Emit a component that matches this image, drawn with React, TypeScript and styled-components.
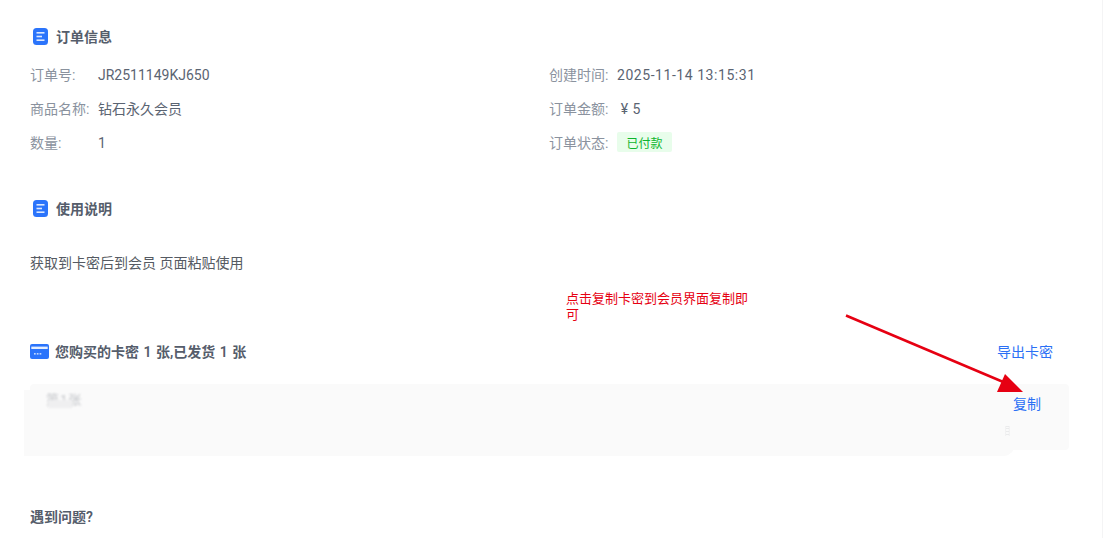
import React from "react";
import styled, { createGlobalStyle } from "styled-components";

const Global = createGlobalStyle`
  html, body { margin: 0; padding: 0; background: #fff; }
  body { font-family: Roboto, "Noto Sans CJK SC", sans-serif; font-size: 14px; overflow: hidden; }
`;

const Page = styled.div`
  position: relative;
  width: 1103px;
  height: 538px;
  box-sizing: border-box;
  padding: 25px 33px 0 30px;
  overflow: hidden;
  border-right: 1px solid #f4f4f5;
`;

const Heading = styled.div<{ $top?: number }>`
  display: flex;
  align-items: center;
  justify-content: space-between;
  height: 22px;
  margin-top: ${(p) => p.$top ?? 0}px;
`;

const HeadingLeft = styled.div<{ $card?: boolean }>`
  display: flex;
  align-items: center;
  gap: ${(p) => (p.$card ? 6 : 8)}px;
  padding-left: ${(p) => (p.$card ? 0 : 3)}px;
`;

const HeadingText = styled.span`
  font-size: 14px;
  font-weight: 600;
  color: #555d6b;
  white-space: pre;
  word-spacing: 1px;
`;

const InfoGrid = styled.div`
  display: grid;
  grid-template-columns: 519px 1fr;
  grid-auto-rows: 34px;
  margin-top: 10px;
`;

const InfoRow = styled.div`
  display: flex;
  align-items: center;
`;

const Label = styled.span`
  width: 68px;
  flex: none;
  font-size: 14px;
  color: #8a929e;
`;

const Value = styled.span<{ $latin?: boolean; $spacing?: number }>`
  font-size: 14px;
  color: #5b6472;
  padding-top: ${(p) => (p.$latin ? 2 : 0)}px;
  letter-spacing: ${(p) => p.$spacing ?? 0}px;
`;

const Tag = styled.span`
  display: inline-flex;
  align-items: center;
  justify-content: center;
  width: 55px;
  height: 20px;
  font-size: 12px;
  background: #e8fdeb;
  color: #0cb52d;
  border-radius: 2px;
`;

const Body = styled.p`
  margin: 33px 0 0;
  height: 22px;
  line-height: 22px;
  font-size: 14px;
  color: #555a62;
`;

const ExportLink = styled.a`
  font-size: 14px;
  color: #2b70f5;
  margin-right: 16px;
`;

const CardPanel = styled.div`
  position: relative;
  margin-top: 22px;
  height: 66px;
  background: #fafafa;
  border-radius: 4px;
  display: flex;
  justify-content: flex-end;
`;

const Smear = styled.div`
  position: absolute;
  left: -6px;
  top: 6px;
  width: 991px;
  height: 66px;
  background: #fafafa;
  border-radius: 0 0 12px 0;
`;

const BlurText = styled.span`
  position: absolute;
  left: 16px;
  top: 5px;
  font-size: 13px;
  letter-spacing: 1px;
  color: #c4c6ca;
  filter: blur(1px);
`;

const BlurBlock = styled.span`
  position: absolute;
  left: 18px;
  top: 16px;
  width: 24px;
  height: 8px;
  background: #efeff0;
  filter: blur(0.8px);
`;

const CopyLink = styled.a`
  position: relative;
  margin: 11px 28px 0 0;
  height: 18px;
  line-height: 18px;
  font-size: 14px;
  color: #2b70f5;
`;

const Ghost = styled.span`
  position: absolute;
  right: 56px;
  top: 42px;
  font-size: 11px;
  line-height: 12px;
  transform: scaleX(0.5);
  color: #e6e7e8;
`;

const Footer = styled.div`
  margin-top: 56px;
  height: 22px;
  line-height: 22px;
  font-size: 14px;
  font-weight: 600;
  color: #555d6b;
`;

const Note = styled.div`
  position: absolute;
  left: 566px;
  top: 291px;
  width: 190px;
  font-size: 13px;
  line-height: 16px;
  color: #e60012;
`;

const Arrow = styled.svg`
  position: absolute;
  left: 840px;
  top: 310px;
  pointer-events: none;
`;

const DocIcon = () => (
  <svg width="15" height="17" viewBox="0 0 15 17">
    <rect x="0" y="0" width="15" height="17" rx="3.5" fill="#2b74fb" />
    <rect x="3.5" y="4" width="8" height="1.6" fill="#dbe8ff" />
    <rect x="3.5" y="7.7" width="5.5" height="1.6" fill="#dbe8ff" />
    <rect x="3.5" y="11.4" width="8" height="1.6" fill="#dbe8ff" />
  </svg>
);

const CardIcon = () => (
  <svg width="19" height="15" viewBox="0 0 19 15">
    <rect x="0" y="0" width="19" height="15" rx="2" fill="#2b74fb" />
    <rect x="1.3" y="2.6" width="16.4" height="2.4" fill="#e4eeff" />
    <rect x="4" y="9.2" width="1.7" height="1.3" fill="#e4eeff" />
    <rect x="6.8" y="9.2" width="1.7" height="1.3" fill="#e4eeff" />
    <rect x="9.6" y="9.2" width="1.7" height="1.3" fill="#e4eeff" />
  </svg>
);

export default function App() {
  return (
    <>
      <Global />
      <Page>
        <Heading>
          <HeadingLeft>
            <DocIcon />
            <HeadingText>订单信息</HeadingText>
          </HeadingLeft>
        </Heading>
        <InfoGrid>
          <InfoRow><Label>订单号:</Label><Value $latin>JR2511149KJ650</Value></InfoRow>
          <InfoRow><Label>创建时间:</Label><Value $latin $spacing={0.55}>2025-11-14 13:15:31</Value></InfoRow>
          <InfoRow><Label>商品名称:</Label><Value>钻石永久会员</Value></InfoRow>
          <InfoRow><Label>订单金额:</Label><Value $latin $spacing={0.4}>&nbsp;¥ 5</Value></InfoRow>
          <InfoRow><Label>数量:</Label><Value $latin>1</Value></InfoRow>
          <InfoRow><Label>订单状态:</Label><Tag>已付款</Tag></InfoRow>
        </InfoGrid>
        <Heading $top={38}>
          <HeadingLeft>
            <DocIcon />
            <HeadingText>使用说明</HeadingText>
          </HeadingLeft>
        </Heading>
        <Body>获取到卡密后到会员 页面粘贴使用</Body>
        <Heading $top={66}>
          <HeadingLeft $card>
            <CardIcon />
            <HeadingText>您购买的卡密 1 张,已发货 1 张</HeadingText>
          </HeadingLeft>
          <ExportLink>导出卡密</ExportLink>
        </Heading>
        <CardPanel>
          <Smear />
          <BlurText>第1张</BlurText>
          <BlurBlock />
          <CopyLink>复制</CopyLink>
          <Ghost>目</Ghost>
        </CardPanel>
        <Footer>遇到问题?</Footer>
        <Note>点击复制卡密到会员界面复制即可</Note>
        <Arrow width="185" height="90" viewBox="0 0 185 90">
          <line x1="6" y1="5.5" x2="168" y2="74" stroke="#e60012" strokeWidth="2.5" />
          <polygon points="165,64 183,82 157,82" fill="#e60012" />
        </Arrow>
      </Page>
    </>
  );
}
